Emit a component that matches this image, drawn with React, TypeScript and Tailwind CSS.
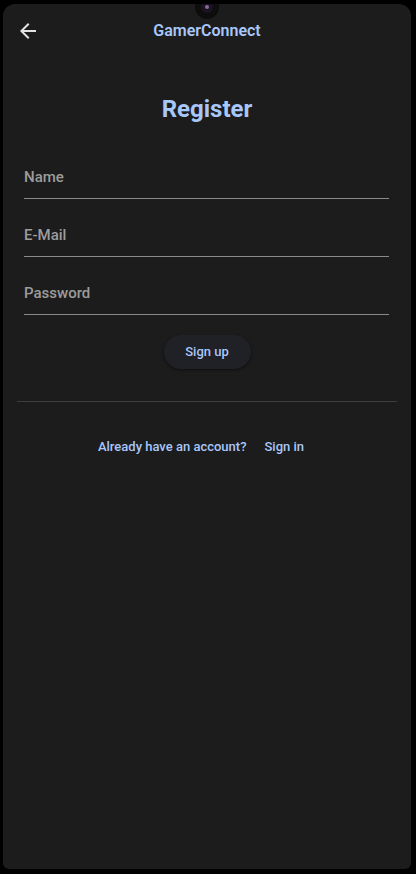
function BackArrow() {
  return (
    <svg width="24" height="24" viewBox="0 0 24 24" fill="#e3e3e3">
      <path d="M20 11H7.83l5.59-5.59L12 4l-8 8 8 8 1.41-1.41L7.83 13H20v-2z" />
    </svg>
  )
}

function Field({ label }: { label: string }) {
  return (
    <div className="pt-[26px] pb-[11px] border-b border-[#8a8a8a]">
      <div className="text-[15px] leading-[20px] font-medium text-[#9c9c9c]">{label}</div>
    </div>
  )
}

export default function App() {
  return (
    <div className="w-[416px] h-[874px] bg-black pt-[4px] pl-[3px] pr-[5px] pb-[5px] font-['Roboto',sans-serif]">
      <div className="relative h-full rounded-[12px] rounded-b-[6px] bg-[#1c1c1c] overflow-hidden">
        {/* camera */}
        <div className="absolute left-1/2 -translate-x-1/2 -top-[9px] w-[24px] h-[24px] rounded-full bg-[#0d0d0d] flex items-center justify-center">
          <div className="w-[12px] h-[12px] rounded-full bg-[#1a1420] flex items-center justify-center">
            <div className="w-[4px] h-[4px] rounded-full bg-[#8a6a9a]"></div>
          </div>
        </div>

        {/* header */}
        <div className="grid grid-cols-[56px_1fr_56px] items-center h-[53px]">
          <div className="pl-[13px] flex items-center">
            <BackArrow />
          </div>
          <div className="text-center text-[16px] font-semibold text-[#a8c7fa]">GamerConnect</div>
          <div></div>
        </div>

        <h1 className="mt-[36px] text-center text-[24px] leading-[32px] font-bold text-[#a8c7fa]">Register</h1>

        <div className="mt-[16px] ml-[21px] mr-[22px]">
          <Field label="Name" />
          <Field label="E-Mail" />
          <Field label="Password" />
        </div>

        <div className="mt-[20px] flex justify-center">
          <button className="w-[87px] h-[34px] rounded-full bg-[#202027] shadow-[0_1px_3px_rgba(0,0,0,0.5)] text-[13px] font-medium text-[#a8c7fa]">
            Sign up
          </button>
        </div>

        <div className="mt-[32px] mx-[14px] border-t border-[#3d3d3d]"></div>

        <div className="mt-[36px] pr-[12px] flex justify-center items-center gap-[18px] text-[13px] leading-[18px] font-medium text-[#a8c7fa]">
          <span>Already have an account?</span>
          <span>Sign in</span>
        </div>
      </div>
    </div>
  )
}
